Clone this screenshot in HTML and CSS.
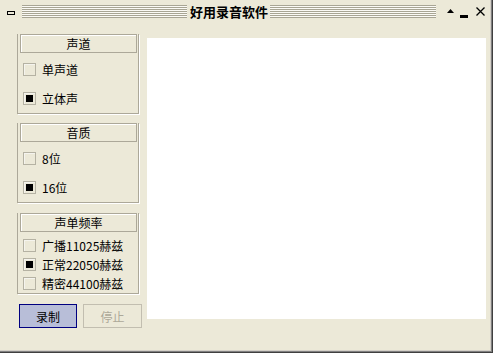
FILE: index.html
```html
<!doctype html>
<html lang="zh-CN">
  <head>
    <meta charset="UTF-8" />
    <meta name="viewport" content="width=device-width, initial-scale=1.0" />
    <title>好用录音软件</title>
    <link rel="stylesheet" href="styles.css">
  </head>
  <body>
    <main class="window">
        <header class="titlebar">
            <span class="sys-icon"></span>
            <span class="stripes stripes-left"></span>
            <h1 class="title">好用录音软件</h1>
            <span class="stripes stripes-right"></span>
            <svg class="tb-btn tb-up" width="7" height="4" viewBox="0 0 7 4"><polygon points="0,4 3.5,0 7,4" fill="#000"/></svg>
            <span class="tb-btn tb-min"></span>
            <svg class="tb-btn tb-close" width="9" height="9" viewBox="0 0 9 9"><path d="M0.5 0.5 L8.5 8.5 M8.5 0.5 L0.5 8.5" stroke="#000" stroke-width="1.3" fill="none"/></svg>
        </header>

        <div class="content">
            <div class="sidebar">
                <section class="group">
                    <div class="group-head">声道</div>
                    <div class="rows rows-wide">
                        <label class="row"><input type="checkbox"><span>单声道</span></label>
                        <label class="row"><input type="checkbox" checked><span>立体声</span></label>
                    </div>
                </section>

                <section class="group">
                    <div class="group-head">音质</div>
                    <div class="rows rows-wide">
                        <label class="row"><input type="checkbox"><span>8位</span></label>
                        <label class="row"><input type="checkbox" checked><span>16位</span></label>
                    </div>
                </section>

                <section class="group group-rate">
                    <div class="group-head">声单频率</div>
                    <div class="rows rows-tight">
                        <label class="row"><input type="checkbox"><span>广播11025赫兹</span></label>
                        <label class="row"><input type="checkbox" checked><span>正常22050赫兹</span></label>
                        <label class="row"><input type="checkbox"><span>精密44100赫兹</span></label>
                    </div>
                </section>

                <div class="buttons">
                    <button type="button" id="record">录制</button>
                    <button type="button" id="stop" disabled>停止</button>
                </div>
            </div>

            <section class="canvas"></section>
        </div>
    </main>
  </body>
</html>
```

FILE: styles.css
```css
* {
    box-sizing: border-box;
    margin: 0;
    padding: 0;
}

body {
    width: 493px;
    height: 353px;
    overflow: hidden;
    font-family: "Noto Sans CJK SC", "Noto Sans", sans-serif;
    font-size: 12px;
    color: #000;
    background-color: #ece9d8;
}

.window {
    width: 493px;
    height: 353px;
    background-color: #ece9d8;
    box-shadow: inset -1px -1px 0 #404040, inset -2px -2px 0 #808080, inset -3px -3px 0 #d4d0c8;
    display: flex;
    flex-direction: column;
}

/* title bar */

.titlebar {
    height: 22px;
    display: flex;
    align-items: center;
    padding: 0 0 0 7px;
}

.sys-icon {
    width: 8px;
    height: 4px;
    border: 1px solid #000;
    background: #ece9d8;
    margin-top: 3px;
    flex: none;
}

.stripes {
    flex: none;
    height: 13px;
    margin-top: 1px;
    background: repeating-linear-gradient(to bottom, #a8a594 0 1px, #fbfaf5 1px 2px);
}

.stripes-left {
    width: 165px;
    margin-left: 7px;
}

.stripes-right {
    width: 166px;
}

.title {
    flex: none;
    width: 83px;
    font-size: 13px;
    font-weight: bold;
    line-height: 1;
    padding: 0 2px 0 3px;
    white-space: nowrap;
}

.tb-btn {
    display: block;
    flex: none;
}

.tb-up {
    margin-left: 11px;
    margin-top: -1px;
}

.tb-min {
    width: 8px;
    height: 3px;
    background: #000;
    margin-left: 6px;
    margin-top: 10px;
}

.tb-close {
    margin-left: 8px;
    margin-top: 1px;
}

/* content */

.content {
    display: flex;
    gap: 8px;
    padding: 12px 0 0 17px;
}

.sidebar {
    width: 122px;
    flex: none;
    display: flex;
    flex-direction: column;
    gap: 9px;
}

.group {
    border: 1px solid #aca899;
    border-top: none;
    box-shadow: 1px 1px 0 #fff;
    height: 80px;
}

.group-rate {
    height: 81px;
    margin-top: 1px;
}

.group-head {
    height: 19px;
    margin: 0 1px 0 2px;
    border: 1px solid #aca899;
    box-shadow: inset 1px 1px 0 #fff;
    text-align: center;
    line-height: 17px;
}

.rows {
    display: flex;
    flex-direction: column;
    padding-left: 5px;
}

.rows-wide {
    padding-top: 2px;
}

.rows-wide .row {
    height: 29px;
}

.rows-tight {
    padding-top: 4px;
}

.rows-tight .row {
    height: 19px;
}

.row {
    display: flex;
    align-items: center;
    gap: 6px;
    line-height: 1;
}

.row input {
    appearance: none;
    width: 13px;
    height: 13px;
    border: 1px solid #b5b2a3;
    box-shadow: inset 1px 1px 0 #f5f4ee;
    background: #ece9d8;
    display: grid;
    place-items: center;
    flex: none;
}

.row input:checked::after {
    content: "";
    width: 7px;
    height: 7px;
    background: #000;
}

/* buttons */

.buttons {
    display: flex;
    gap: 6px;
    padding-left: 2px;
    margin-top: 1px;
}

button {
    flex: none;
    height: 24px;
    font-family: inherit;
    font-size: 12px;
    background: #ece9d8;
}

button#record {
    width: 58px;
    background: #b8bed8;
    border: 1px solid #000080;
    color: #000;
}

button#stop {
    width: 59px;
    border: 1px solid #c2beb0;
    color: #aca899;
}

.canvas {
    width: 339px;
    height: 281px;
    margin-top: 4px;
    background: #fff;
}
```
